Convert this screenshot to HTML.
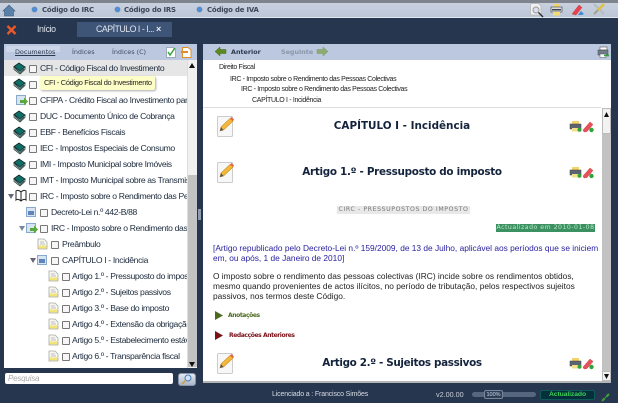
<!DOCTYPE html>
<html><head><meta charset="utf-8">
<style>
html,body{margin:0;padding:0;width:618px;height:403px;overflow:hidden;background:#27364f;font-family:"Liberation Sans",sans-serif}
#w{position:absolute;left:0;top:0;width:618px;height:403px;overflow:hidden;filter:blur(.25px)}
.a,.t{position:absolute}
.t{white-space:nowrap;line-height:12px;height:12px}
.r{font-size:8.6px;letter-spacing:-.35px;color:#1c2a3c;overflow:hidden}
.cb{position:absolute;width:6px;height:6px;border:1px solid #777;background:#f6f6f6;border-radius:1px}
.s{font-family:"DejaVu Sans",sans-serif}
.top{font-size:6.9px;font-weight:bold;letter-spacing:-.17px;color:#3b4656}
.hd{font-size:6.4px;color:#3d4b62}
.bc{font-size:7px;letter-spacing:-.33px;color:#222}
.h{left:203px;width:398px;text-align:center;font-size:10.4px;font-weight:bold;color:#14233c}
.p{left:213px;font-size:8.35px;color:#222}
svg{position:absolute;overflow:visible}
</style></head><body>
<svg width="0" height="0" style="position:absolute">
<defs>
<g id="book"><path d="M0 4.5 L5 1 L11 5 L6 9Z" fill="#0f6f68" stroke="#102a2a" stroke-width=".8"/><path d="M0 5 V7.5 L6 12 L11 7.5 V5 L6 9Z" fill="#dfe8e6" stroke="#102a2a" stroke-width=".7"/><path d="M1 6.5 L6 10.5 L10 7" fill="none" stroke="#1e4a48" stroke-width="1"/></g>
<g id="doc"><path d="M1 1H7L10 4V11H1Z" fill="#f7f7ee" stroke="#aaa" stroke-width=".8"/><rect x="1.5" y="7.5" width="8" height="3" fill="#f2e67a"/><path d="M3 4H7M3 6H8" stroke="#aab" stroke-width=".7"/></g>
<g id="page"><rect x=".5" y="1.5" width="9" height="9" fill="#d7e4f4" stroke="#8aa7cc"/><rect x="2" y="5" width="6" height="4" fill="#5f86bb"/></g>
<g id="pagego"><rect x=".5" y="1.5" width="9" height="9" fill="#d7e4f4" stroke="#8aa7cc"/><path d="M4 6H8V3.5L12 7.5 8 11.5V9H4Z" fill="#5aa83c"/></g>
<g id="pen"><rect x=".5" y=".5" width="15" height="20" rx="1" fill="#f7f7f7" stroke="#ccc"/><path d="M3 15 L4 11 L13 2.5 L16 5 L6.5 14Z" fill="#f5b93a" stroke="#c98a1d" stroke-width=".6"/><path d="M13 2.5 L14.5 1 L17 3.5 L16 5Z" fill="#e8604a"/><path d="M3 15 L4 11 L6.5 14Z" fill="#555"/></g>
<g id="prt"><rect x="2" y="0" width="7" height="4" fill="#f2d46a"/><rect x="0" y="3" width="11" height="5" fill="#5b6470" stroke="#444" stroke-width=".5"/><rect x="2" y="7" width="7" height="3.5" fill="#f3e08a"/><circle cx="9.5" cy="8.8" r="2" fill="#2fa33a"/></g>
<g id="mark"><path d="M0 9 L7 1 L10 3.5 L4 10.5 L1 11Z" fill="#e8505a" stroke="#c33" stroke-width=".4"/><circle cx="8.5" cy="9" r="2.2" fill="#2fa33a"/></g>
</defs>
</svg>
<div id="w">
<!-- top toolbar -->
<div class="a" style="left:0;top:0;width:618px;height:3px;background:#7d848e"></div>
<div class="a" style="left:0;top:3px;width:618px;height:14px;background:linear-gradient(#c9d1df,#bcc6d6)"></div>
<div class="a" style="left:0;top:17px;width:618px;height:1px;background:#e2e8f0"></div>
<svg style="left:3px;top:4px" width="12" height="12"><path d="M0 7 L6 1 L12 7 H10.5 V12 H1.5 V7Z" fill="#5b80a8" stroke="#3e5d80" stroke-width=".6"/></svg>
<div class="a" style="left:32px;top:7px;width:5px;height:5px;border-radius:50%;background:#4a8fd8;box-shadow:0 0 1px #235"></div>
<div class="t s top" style="left:42px;top:4px">Código do IRC</div>
<div class="a" style="left:115px;top:7px;width:5px;height:5px;border-radius:50%;background:#4a8fd8;box-shadow:0 0 1px #235"></div>
<div class="t s top" style="left:124px;top:4px">Código do IRS</div>
<div class="a" style="left:197px;top:7px;width:5px;height:5px;border-radius:50%;background:#4a8fd8;box-shadow:0 0 1px #235"></div>
<div class="t s top" style="left:207px;top:4px">Código de IVA</div>
<svg style="left:530px;top:3px" width="16" height="14"><path d="M.5 .5H8.5L11 3V12H.5Z" fill="#eef0f2" stroke="#b5b5b5" stroke-width=".7"/><circle cx="6" cy="7" r="3" fill="#dde" stroke="#999"/><path d="M8.5 9.5 L13 14" stroke="#333" stroke-width="1.5"/></svg>
<svg style="left:551px;top:4px" width="12" height="12"><rect x="2" y="0" width="7" height="4" fill="#f2d46a"/><rect x="0" y="3" width="11" height="5" fill="#d8dde4" stroke="#555" stroke-width=".7"/><rect x="1" y="5" width="9" height="1.5" fill="#444"/><rect x="2" y="8" width="7" height="3.5" fill="#f3dc70"/></svg>
<svg style="left:572px;top:4px" width="14" height="12"><path d="M0 10 L7 1 L10 3.5 L4 11Z" fill="#e8424f" stroke="#b33" stroke-width=".4"/><path d="M6 11 L9 7 L12 10 L10 11Z" fill="#3f8ad8"/></svg>
<svg style="left:592px;top:3px" width="14" height="13"><path d="M2 1 L12 11" stroke="#b5bcc4" stroke-width="2"/><path d="M12 1 L2 11" stroke="#e0c33a" stroke-width="2.5"/><path d="M2 11 L6 7" stroke="#9aa3ad" stroke-width="2"/></svg>

<!-- tab row -->
<svg style="left:6px;top:23px" width="11" height="13"><path d="M1.5 3 L9.5 11 M9.5 3 L1.5 11" stroke="#ea5a2a" stroke-width="2.4"/></svg>
<div class="t" style="left:37px;top:23px;font-size:8.8px;letter-spacing:-.4px;color:#dfe5ee">Início</div>
<div class="a" style="left:77px;top:22px;width:95px;height:15px;background:#3f5578"></div>
<div class="t" style="left:96px;top:23px;font-size:8.8px;letter-spacing:-.5px;color:#dfe5ee">CAPÍTULO I - I...</div>
<div class="t" style="left:156px;top:23px;font-size:9px;font-weight:bold;color:#e8edf4">×</div>

<!-- left panel -->
<div class="a" style="left:4px;top:44px;width:193px;height:16px;background:#bcc8df"></div>
<div class="a" style="left:6px;top:46px;width:54px;height:6px;background:#ccd6e8"></div>
<div class="t s hd" style="left:15px;top:46px;color:#2c3a50;text-decoration:underline">Documentos</div>
<div class="t s hd" style="left:72px;top:46px">Índices</div>
<div class="t s hd" style="left:112px;top:46px">Índices (C)</div>
<svg style="left:166px;top:47px" width="10" height="11"><path d="M.5.5H7L9.5 3V10.5H.5Z" fill="#fff" stroke="#9ab"/><path d="M2 5 L4 8 L9 1" stroke="#3aa53a" stroke-width="1.5" fill="none"/></svg>
<svg style="left:181px;top:47px" width="11" height="11"><path d="M1.5.5H7L10 3V10.5H1.5Z" fill="#fff" stroke="#e0902a"/><rect x="0" y="4" width="7" height="2" fill="#e08a2a"/></svg>

<div class="a" style="left:4px;top:60px;width:193px;height:308px;background:#fff"></div>
<div class="a" style="left:4px;top:60px;width:183px;height:16px;background:#e6e6e6"></div>

<svg style="left:14px;top:62px" width="12" height="13"><use href="#book"/></svg><div class="cb" style="left:29px;top:65px"></div><div class="t r" style="left:40px;top:62px;width:147px">CFI - Código Fiscal do Investimento</div>
<svg style="left:14px;top:78px" width="12" height="13"><use href="#book"/></svg><div class="cb" style="left:29px;top:81px"></div>
<svg style="left:16px;top:94px" width="12" height="12"><use href="#pagego"/></svg><div class="cb" style="left:29px;top:97px"></div><div class="t r" style="left:40px;top:94px;width:147px">CFIPA - Crédito Fiscal ao Investimento para</div>
<svg style="left:14px;top:110px" width="12" height="13"><use href="#book"/></svg><div class="cb" style="left:29px;top:113px"></div><div class="t r" style="left:40px;top:110px;width:147px">DUC - Documento Único de Cobrança</div>
<svg style="left:14px;top:126px" width="12" height="13"><use href="#book"/></svg><div class="cb" style="left:29px;top:129px"></div><div class="t r" style="left:40px;top:126px;width:147px">EBF - Benefícios Fiscais</div>
<svg style="left:14px;top:142px" width="12" height="13"><use href="#book"/></svg><div class="cb" style="left:29px;top:145px"></div><div class="t r" style="left:40px;top:142px;width:147px">IEC - Impostos Especiais de Consumo</div>
<svg style="left:14px;top:158px" width="12" height="13"><use href="#book"/></svg><div class="cb" style="left:29px;top:161px"></div><div class="t r" style="left:40px;top:158px;width:147px">IMI - Imposto Municipal sobre Imóveis</div>
<svg style="left:14px;top:174px" width="12" height="13"><use href="#book"/></svg><div class="cb" style="left:29px;top:177px"></div><div class="t r" style="left:40px;top:174px;width:147px">IMT - Imposto Municipal sobre as Transmissões</div>

<svg style="left:8px;top:193px" width="6" height="6"><path d="M0 1H6L3 6Z" fill="#667"/></svg>
<svg style="left:15px;top:190px" width="12" height="12"><path d="M6 2 C4 0 2 0 1 1V10C2 9 4 9 6 11 8 9 10 9 11 10V1C10 0 8 0 6 2ZM6 2V11" fill="#fff" stroke="#222" stroke-width="1"/></svg>
<div class="cb" style="left:29px;top:193px"></div><div class="t r" style="left:40px;top:190px;width:147px">IRC - Imposto sobre o Rendimento das Pessoas</div>

<svg style="left:26px;top:206px" width="12" height="12"><use href="#page"/></svg><div class="cb" style="left:40px;top:209px"></div><div class="t r" style="left:51px;top:206px;width:136px">Decreto-Lei n.º 442-B/88</div>

<svg style="left:19px;top:225px" width="6" height="6"><path d="M0 1H6L3 6Z" fill="#789"/></svg>
<svg style="left:26px;top:222px" width="12" height="12"><use href="#pagego"/></svg><div class="cb" style="left:40px;top:225px"></div><div class="t r" style="left:51px;top:222px;width:136px">IRC - Imposto sobre o Rendimento das Pessoas</div>

<svg style="left:37px;top:238px" width="11" height="12"><use href="#doc"/></svg><div class="cb" style="left:51px;top:241px"></div><div class="t r" style="left:62px;top:238px;width:125px">Preâmbulo</div>

<svg style="left:30px;top:257px" width="6" height="6"><path d="M0 1H6L3 6Z" fill="#667"/></svg>
<svg style="left:37px;top:254px" width="12" height="12"><use href="#page"/></svg><div class="cb" style="left:51px;top:257px"></div><div class="t r" style="left:62px;top:254px;width:125px">CAPÍTULO I - Incidência</div>

<svg style="left:48px;top:270px" width="11" height="12"><use href="#doc"/></svg><div class="cb" style="left:62px;top:273px"></div><div class="t r" style="left:72px;top:270px;width:115px">Artigo 1.º - Pressuposto do imposto</div>
<svg style="left:48px;top:286px" width="11" height="12"><use href="#doc"/></svg><div class="cb" style="left:62px;top:289px"></div><div class="t r" style="left:72px;top:286px;width:115px">Artigo 2.º - Sujeitos passivos</div>
<svg style="left:48px;top:302px" width="11" height="12"><use href="#doc"/></svg><div class="cb" style="left:62px;top:305px"></div><div class="t r" style="left:72px;top:302px;width:115px">Artigo 3.º - Base do imposto</div>
<svg style="left:48px;top:318px" width="11" height="12"><use href="#doc"/></svg><div class="cb" style="left:62px;top:321px"></div><div class="t r" style="left:72px;top:318px;width:115px">Artigo 4.º - Extensão da obrigação</div>
<svg style="left:48px;top:334px" width="11" height="12"><use href="#doc"/></svg><div class="cb" style="left:62px;top:337px"></div><div class="t r" style="left:72px;top:334px;width:115px">Artigo 5.º - Estabelecimento estável</div>
<svg style="left:48px;top:350px" width="11" height="12"><use href="#doc"/></svg><div class="cb" style="left:62px;top:353px"></div><div class="t r" style="left:72px;top:350px;width:115px">Artigo 6.º - Transparência fiscal</div>

<!-- tooltip -->
<div class="a" style="left:40px;top:76px;width:115px;height:14px;background:#fdfdc8;border-radius:2px;box-shadow:1px 1px 2px #aaa"></div>
<div class="t" style="left:44px;top:77px;font-size:7.4px;letter-spacing:-.28px;color:#222">CFI - Código Fiscal do Investimento</div>

<!-- left scrollbar -->
<div class="a" style="left:187px;top:60px;width:10px;height:308px;background:#f0f0f0;border-left:1px solid #ddd;box-sizing:border-box"></div>
<div class="a" style="left:188px;top:175px;width:9px;height:192px;background:#c2c2c2"></div>
<svg style="left:189px;top:63px" width="6" height="6"><path d="M0 5H6L3 0Z" fill="#111"/></svg>
<svg style="left:189px;top:361px" width="6" height="6"><path d="M0 1H6L3 6Z" fill="#111"/></svg>

<!-- search -->
<div class="a" style="left:5px;top:373px;width:168px;height:11px;background:#fff;border-radius:2px"></div>
<div class="t" style="left:8px;top:373px;font-size:8px;font-style:italic;letter-spacing:-.2px;color:#aaa">Pesquisa</div>
<div class="a" style="left:178px;top:373px;width:18px;height:13px;background:linear-gradient(#e4e9f0,#aab5c6);border-radius:3px;border:1px solid #8894a8;box-sizing:border-box"></div>
<svg style="left:181px;top:374px" width="12" height="11"><circle cx="7" cy="4" r="3" fill="#cfe3f8" stroke="#4a78b5"/><path d="M5 6 L1 10" stroke="#c9a04a" stroke-width="1.6"/></svg>

<!-- splitter -->
<div class="a" style="left:198px;top:209px;width:3px;height:11px;background:#8d9ab0"></div>

<!-- right panel -->
<div class="a" style="left:203px;top:44px;width:408px;height:16px;background:#bcc8df"></div>
<svg style="left:215px;top:46px" width="12" height="11"><path d="M0 5.5 L5 1 V3.5 H11 V7.5 H5 V10Z" fill="#5c8a22" stroke="#466b1a" stroke-width=".5"/></svg>
<div class="t s" style="left:231px;top:46px;font-size:6.4px;font-weight:bold;color:#2c3a50">Anterior</div>
<div class="t s" style="left:281px;top:46px;font-size:6.4px;font-weight:bold;color:#8a96a8">Seguinte</div>
<svg style="left:317px;top:46px" width="12" height="11"><path d="M11 5.5 L6 1 V3.5 H0 V7.5 H6 V10Z" fill="#8cab70" stroke="#7d9c62" stroke-width=".5"/></svg>
<svg style="left:598px;top:47px" width="11" height="11"><rect x="2" y="0" width="7" height="3" fill="#fff" stroke="#555" stroke-width=".6"/><rect x="0" y="3" width="10" height="5" fill="#6f7c8c" stroke="#444" stroke-width=".5"/><rect x="2" y="7" width="6" height="3.5" fill="#fff" stroke="#555" stroke-width=".5"/><path d="M6 8.5H11" stroke="#2fa33a" stroke-width="1.6"/></svg>

<div class="a" style="left:203px;top:60px;width:408px;height:322px;background:#fff"></div>
<div class="t bc" style="left:219px;top:62px">Direito Fiscal</div>
<div class="t bc" style="left:230px;top:74px">IRC - Imposto sobre o Rendimento das Pessoas Colectivas</div>
<div class="t bc" style="left:241px;top:84px">IRC - Imposto sobre o Rendimento das Pessoas Colectivas</div>
<div class="t bc" style="left:252px;top:95px">CAPÍTULO I - Incidência</div>
<div class="a" style="left:203px;top:107px;width:398px;height:1px;background:#ddd"></div>

<svg style="left:217px;top:116px" width="18" height="21"><use href="#pen"/></svg>
<div class="t s h" style="top:120px">CAPÍTULO I - Incidência</div>
<svg style="left:570px;top:121px" width="12" height="11"><use href="#prt"/></svg>
<svg style="left:583px;top:121px" width="12" height="12"><use href="#mark"/></svg>

<svg style="left:217px;top:162px" width="18" height="21"><use href="#pen"/></svg>
<div class="t s h" style="top:166px;letter-spacing:-.3px">Artigo 1.º - Pressuposto do imposto</div>
<svg style="left:570px;top:167px" width="12" height="11"><use href="#prt"/></svg>
<svg style="left:583px;top:167px" width="12" height="12"><use href="#mark"/></svg>

<div class="a" style="left:337px;top:206px;width:133px;height:8px;background:#e8e8e8"></div>
<div class="t s" style="left:337px;top:204px;width:133px;text-align:center;font-size:6.2px;letter-spacing:.6px;color:#777">CIRC - PRESSUPOSTOS DO IMPOSTO</div>
<div class="a" style="left:496px;top:224px;width:99px;height:8px;background:#3b9162"></div>
<div class="t s" style="left:496px;top:222px;width:99px;text-align:center;font-size:6.2px;letter-spacing:.5px;color:#b9e6c8">Actualizado em 2010-01-08</div>

<div class="t p" style="top:242px;color:#2a22a0">[Artigo republicado pelo Decreto-Lei n.º 159/2009, de 13 de Julho, aplicável aos períodos que se iniciem</div>
<div class="t p" style="top:252px;color:#2a22a0">em, ou após, 1 de Janeiro de 2010]</div>
<div class="t p" style="top:270px">O imposto sobre o rendimento das pessoas colectivas (IRC) incide sobre os rendimentos obtidos,</div>
<div class="t p" style="top:280px">mesmo quando provenientes de actos ilícitos, no período de tributação, pelos respectivos sujeitos</div>
<div class="t p" style="top:290px">passivos, nos termos deste Código.</div>

<svg style="left:215px;top:311px" width="8" height="9"><path d="M0 0 L8 4.5 L0 9Z" fill="#4c6a1e"/></svg>
<div class="t s" style="left:228px;top:310px;font-size:6px;font-weight:bold;letter-spacing:-.4px;color:#4c6a1e">Anotações</div>
<svg style="left:215px;top:331px" width="8" height="9"><path d="M0 0 L8 4.5 L0 9Z" fill="#7a1018"/></svg>
<div class="t s" style="left:229px;top:330px;font-size:6px;font-weight:bold;letter-spacing:-.4px;color:#7a1018">Redacções Anteriores</div>

<svg style="left:217px;top:353px" width="18" height="21"><use href="#pen"/></svg>
<div class="t s h" style="top:357px;letter-spacing:-.35px">Artigo 2.º - Sujeitos passivos</div>
<svg style="left:570px;top:358px" width="12" height="11"><use href="#prt"/></svg>
<svg style="left:583px;top:358px" width="12" height="12"><use href="#mark"/></svg>

<!-- right scrollbar -->
<div class="a" style="left:602px;top:108px;width:9px;height:274px;background:#c2c2c2"></div>
<div class="a" style="left:602px;top:108px;width:9px;height:26px;background:#f2f2f2;border:1px solid #bbb;box-sizing:border-box"></div>
<svg style="left:604px;top:112px" width="6" height="6"><path d="M0 5H5L2.5 0Z" fill="#111"/></svg>
<div class="a" style="left:602px;top:371px;width:9px;height:10px;background:#f2f2f2;border:1px solid #bbb;box-sizing:border-box"></div>
<svg style="left:604px;top:373px" width="6" height="6"><path d="M0 1H5L2.5 6Z" fill="#111"/></svg>
<div class="a" style="left:203px;top:381px;width:408px;height:2px;background:#b5b5b5"></div>

<!-- status bar -->
<div class="t" style="left:272px;top:389px;font-size:7px;letter-spacing:-.15px;color:#d5dbe4">Licenciado a : Francisco Simões</div>
<div class="t" style="left:436px;top:389px;font-size:7.2px;color:#c9d0da">v2.00.00</div>
<div class="a" style="left:472px;top:392px;width:64px;height:5px;border-radius:3px;background:#56667f"></div>
<div class="a" style="left:484px;top:390px;width:19px;height:9px;border-radius:2px;background:#2e3e58;border:1px solid #7a8799;box-sizing:border-box"></div>
<div class="t" style="left:484px;top:389px;width:19px;text-align:center;font-size:5.5px;color:#d5dbe4">100%</div>
<div class="a" style="left:540px;top:390px;width:55px;height:10px;border-radius:2px;background:#05303a;border:1px solid #0e5a5a;box-sizing:border-box"></div>
<div class="t" style="left:540px;top:389px;width:55px;text-align:center;font-size:6.8px;font-weight:bold;letter-spacing:-.1px;color:#3fcf58">Actualizado</div>
<svg style="left:601px;top:393px" width="9" height="9"><path d="M1 8 L3.5 5.5 M5.5 3.5 L8 1" stroke="#3fa03a" stroke-width="2"/><path d="M3 6 L6 3" stroke="#3fa03a" stroke-width="1"/></svg>
</div>
</body></html>
